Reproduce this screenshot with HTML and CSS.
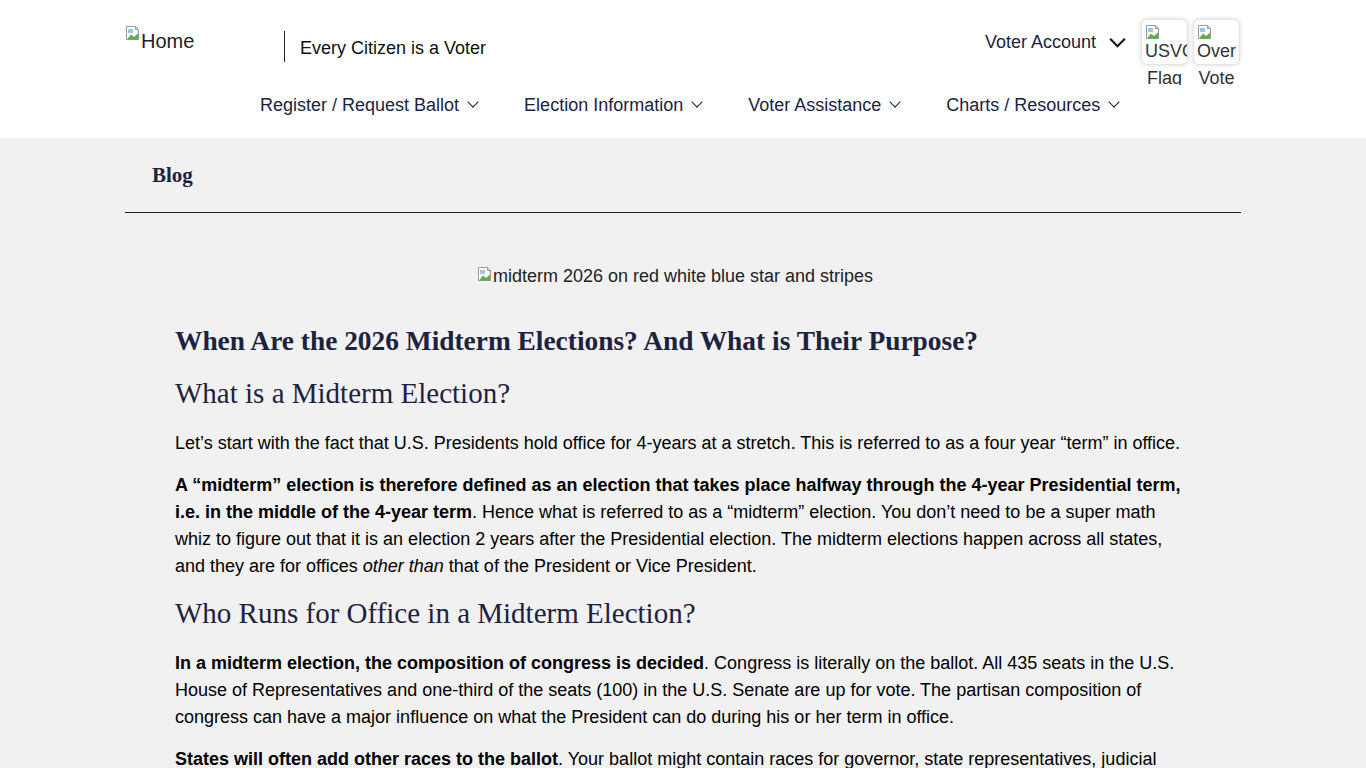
FILE: index.html
```html
<!DOCTYPE html>
<html lang="en">
<head>
    <meta charset="UTF-8">
    <title>When Are the 2026 Midterm Elections? - Blog</title>
    <meta name="viewport" content="width=device-width, initial-scale=1.0">
    <link rel="stylesheet" href="styles.css">
</head>
<body>

    <header class="site-header">
        <div class="header-inner">
            <div class="top-row">
                <a class="logo" href="#">
                    <svg class="broken-img" viewBox="0 0 16 16" width="16" height="16" aria-hidden="true">
                        <path d="M1.5 1.5h9l3 3v10h-12z" fill="#fff" stroke="#9a9a9a"/>
                        <path d="M10.5 1.5v3h3" fill="none" stroke="#9a9a9a"/>
                        <path d="M2 14.5 L6 9.5 L9 12 L13 8.5 V14.5 Z" fill="#5fae4a"/>
                        <rect x="3" y="4" width="5" height="4" fill="#9cc8e8"/>
                    </svg><span class="logo-alt">Home</span>
                </a>
                <div class="tagline">Every Citizen is a Voter</div>

                <div class="account-area">
                    <a class="voter-account" href="#">Voter Account
                        <svg class="chev-bold" viewBox="0 0 20 12" width="19" height="11" aria-hidden="true">
                            <path d="M2 2l8 8 8-8" fill="none" stroke="#1b1b1b" stroke-width="2.4"/>
                        </svg>
                    </a>
                    <div class="badge-item">
                        <div class="badge">
                            <svg class="broken-img" viewBox="0 0 16 16" width="16" height="16" aria-hidden="true">
                                <path d="M1.5 1.5h9l3 3v10h-12z" fill="#fff" stroke="#9a9a9a"/>
                                <path d="M10.5 1.5v3h3" fill="none" stroke="#9a9a9a"/>
                                <path d="M2 14.5 L6 9.5 L9 12 L13 8.5 V14.5 Z" fill="#5fae4a"/>
                                <rect x="3" y="4" width="5" height="4" fill="#9cc8e8"/>
                            </svg>
                            <span class="badge-alt">USVOTE</span>
                        </div>
                        <span class="badge-label">Flag</span>
                    </div>
                    <div class="badge-item">
                        <div class="badge">
                            <svg class="broken-img" viewBox="0 0 16 16" width="16" height="16" aria-hidden="true">
                                <path d="M1.5 1.5h9l3 3v10h-12z" fill="#fff" stroke="#9a9a9a"/>
                                <path d="M10.5 1.5v3h3" fill="none" stroke="#9a9a9a"/>
                                <path d="M2 14.5 L6 9.5 L9 12 L13 8.5 V14.5 Z" fill="#5fae4a"/>
                                <rect x="3" y="4" width="5" height="4" fill="#9cc8e8"/>
                            </svg>
                            <span class="badge-alt">Over</span>
                        </div>
                        <span class="badge-label">Vote</span>
                    </div>
                </div>
            </div>

            <nav class="main-nav">
                <a href="#">Register / Request Ballot <span class="chev"></span></a>
                <a href="#">Election Information <span class="chev"></span></a>
                <a href="#">Voter Assistance <span class="chev"></span></a>
                <a href="#">Charts / Resources <span class="chev"></span></a>
            </nav>
        </div>
    </header>

    <main class="page">
        <div class="page-title">
            <h1>Blog</h1>
        </div>

        <article class="post">
            <div class="hero">
                <svg class="broken-img" viewBox="0 0 16 16" width="16" height="16" aria-hidden="true">
                    <path d="M1.5 1.5h9l3 3v10h-12z" fill="#fff" stroke="#9a9a9a"/>
                    <path d="M10.5 1.5v3h3" fill="none" stroke="#9a9a9a"/>
                    <path d="M2 14.5 L6 9.5 L9 12 L13 8.5 V14.5 Z" fill="#5fae4a"/>
                    <rect x="3" y="4" width="5" height="4" fill="#9cc8e8"/>
                </svg>midterm 2026 on red white blue star and stripes
            </div>

            <h2>When Are the 2026 Midterm Elections? And What is Their Purpose?</h2>

            <h3>What is a Midterm Election?</h3>

            <p>Let’s start with the fact that U.S. Presidents hold office for 4-years at a stretch. This is referred to as a four year “term” in office.</p>

            <p><strong>A “midterm” election is therefore defined as an election that takes place halfway through the 4-year Presidential term, i.e. in the middle of the 4-year term</strong>. Hence what is referred to as a “midterm” election. You don’t need to be a super math whiz to figure out that it is an election 2 years after the Presidential election. The midterm elections happen across all states, and they are for offices <em>other than</em> that of the President or Vice President.</p>

            <h3>Who Runs for Office in a Midterm Election?</h3>

            <p><strong>In a midterm election, the composition of congress is decided</strong>. Congress is literally on the ballot. All 435 seats in the U.S. House of Representatives and one-third of the seats (100) in the U.S. Senate are up for vote. The partisan composition of congress can have a major influence on what the President can do during his or her term in office.</p>

            <p><strong>States will often add other races to the ballot</strong>. Your ballot might contain races for governor, state representatives, judicial positions, mayors, and local ballot measures as well.</p>
        </article>
    </main>

</body>
</html>
```

FILE: styles.css
```css
body {
    margin: 0;
    background-color: #f1f1f1;
    color: #000;
    font-family: "Liberation Sans", Arial, sans-serif;
}

a {
    color: inherit;
    text-decoration: none;
}

.broken-img {
    display: inline-block;
    vertical-align: top;
    flex: none;
}

/* Header */

.site-header {
    background: #fff;
    height: 138px;
}

.header-inner {
    width: 1116px;
    margin: 0 auto;
}

.top-row {
    display: flex;
    align-items: flex-start;
    padding-top: 19px;
    height: 69px;
}

.logo {
    display: flex;
    align-items: flex-start;
    margin-top: 6px;
    width: 159px;
    font-size: 20px;
    color: #222;
    line-height: 20px;
}

.logo-alt {
    padding-top: 6px;
}

.tagline {
    margin-top: 12px;
    border-left: 1px solid #222;
    padding-left: 15px;
    height: 31px;
    line-height: 34px;
    font-size: 18px;
    color: #111;
}

.account-area {
    margin-left: auto;
    margin-right: 1px;
    display: flex;
    align-items: flex-start;
}

.voter-account {
    display: flex;
    align-items: center;
    gap: 12px;
    margin-top: 13px;
    margin-right: 9px;
    font-size: 18px;
    color: #1c2340;
}

.badge-item {
    display: flex;
    flex-direction: column;
    align-items: center;
    width: 47px;
    margin-left: 5px;
}

.badge {
    width: 47px;
    height: 46px;
    box-sizing: border-box;
    border: 1px solid #e4e4e4;
    border-radius: 6px;
    box-shadow: 0 0 4px rgba(0, 0, 0, 0.15);
    background: #fff;
    padding: 4px 0 0 3px;
    overflow: hidden;
    line-height: 18px;
}

.badge-alt {
    display: block;
    font-size: 18px;
    white-space: nowrap;
    color: #333;
}

.badge-label {
    font-size: 18px;
    line-height: 18px;
    height: 16px;
    overflow: hidden;
    color: #333;
    margin-top: 4px;
}

.main-nav {
    display: flex;
    gap: 47px;
    padding-left: 135px;
    margin-top: 7px;
}

.main-nav a {
    font-size: 18px;
    color: #1c2340;
}

.chev {
    display: inline-block;
    width: 7px;
    height: 7px;
    border-right: 1px solid #1c2340;
    border-bottom: 1px solid #1c2340;
    transform: rotate(45deg);
    margin-left: 5px;
    position: relative;
    top: -5px;
}

/* Page */

.page {
    width: 1116px;
    margin: 0 auto;
}

.page-title {
    border-bottom: 1px solid #1c1c2a;
    padding: 24px 27px 23px;
}

.page-title h1 {
    margin: 0;
    font-family: "Liberation Serif", "Times New Roman", serif;
    font-size: 21px;
    line-height: 27px;
    font-weight: bold;
    color: #1c2340;
}

.post {
    padding: 53px 50px 40px;
}

.hero {
    text-align: center;
    font-size: 18px;
    color: #222;
    margin-right: 16px;
    margin-bottom: 37px;
}

.post h2 {
    font-family: "Liberation Serif", "Times New Roman", serif;
    font-size: 27.4px;
    line-height: 34px;
    font-weight: bold;
    color: #1c2340;
    margin: 0 0 17px;
}

.post h3 {
    font-family: "Liberation Serif", "Times New Roman", serif;
    font-size: 29px;
    line-height: 36px;
    font-weight: normal;
    color: #1c2340;
    margin: 0 0 19px;
}

.post p {
    font-size: 18px;
    line-height: 27px;
    margin: 0 0 15px;
}
```
